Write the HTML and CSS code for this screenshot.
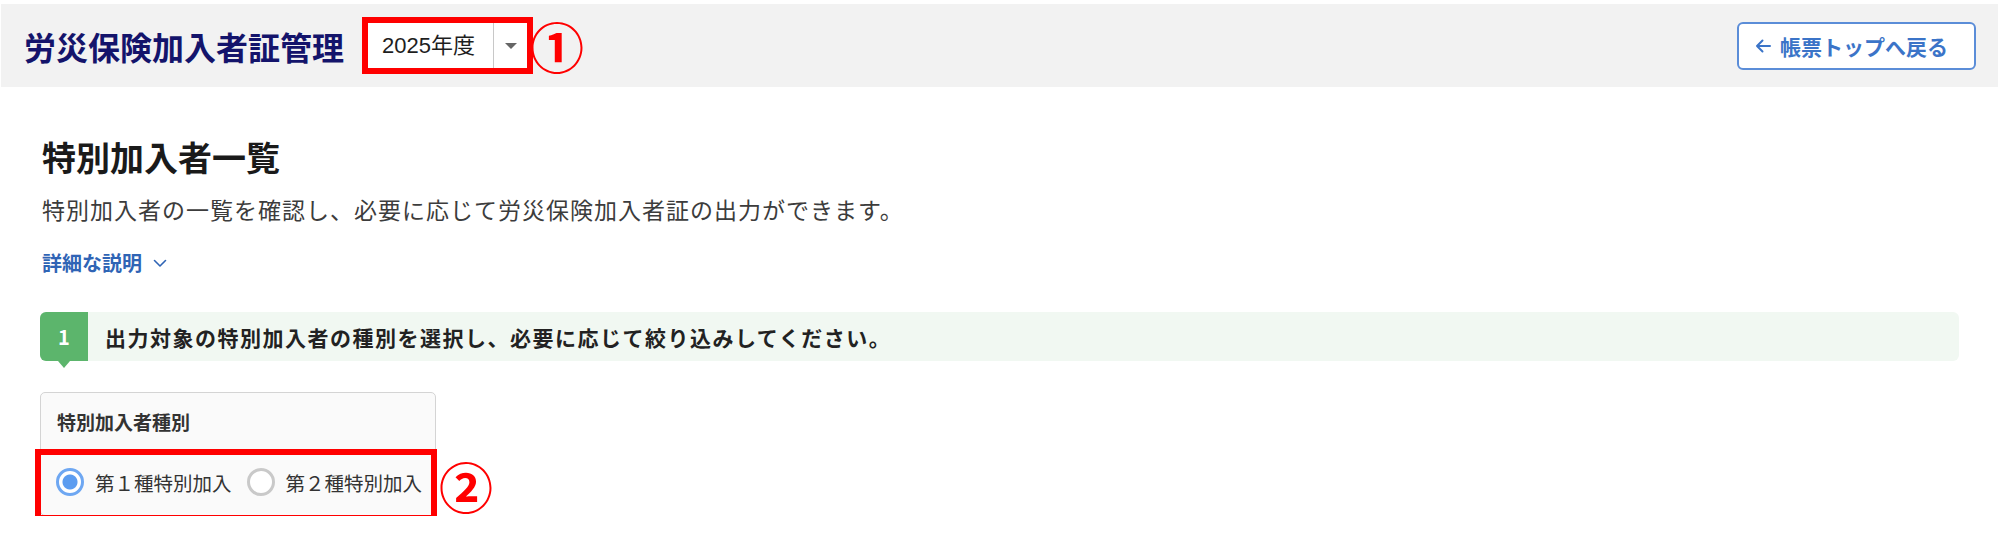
FILE: index.html
```html
<!DOCTYPE html>
<html lang="ja">
  <head>
    <meta charset="UTF-8">
    <title>労災保険加入者証管理</title>
    <link rel="stylesheet" href="styles.css">
  </head>
  <body>
    <div class="topbar">
      <h1 class="app-title">労災保険加入者証管理</h1>
      <div class="year-select">
        <span class="year-value">2025年度</span>
        <span class="year-caret"></span>
      </div>
      <span class="mark">①</span>
      <button class="back-btn" type="button">
        <svg width="20" height="20" viewBox="0 0 20 20"><path d="M17 10H4M9.5 4.5 4 10l5.5 5.5" fill="none" stroke="currentColor" stroke-width="2" stroke-linecap="round" stroke-linejoin="round"/></svg>
        <span>帳票トップへ戻る</span>
      </button>
    </div>

    <div class="content">
      <h2 class="page-title">特別加入者一覧</h2>
      <p class="lead">特別加入者の一覧を確認し、必要に応じて労災保険加入者証の出力ができます。</p>
      <a class="more-link" href="#">詳細な説明
        <svg width="16" height="16" viewBox="0 0 16 16"><path d="M2.5 5.5 8 11l5.5-5.5" fill="none" stroke="currentColor" stroke-width="1.6" stroke-linecap="round" stroke-linejoin="round"/></svg>
      </a>

      <!-- step 1 -->
      <div class="step">
        <div class="step-num">1</div>
        <div class="step-text">出力対象の特別加入者の種別を選択し、必要に応じて絞り込みしてください。</div>
      </div>

      <div class="kind-card">
        <div class="kind-head">特別加入者種別</div>
        <div class="kind-body">
          <label class="radio"><input type="radio" name="kind" checked><span>第１種特別加入</span></label>
          <label class="radio"><input type="radio" name="kind"><span>第２種特別加入</span></label>
        </div>
        <div class="mark-box"></div>
        <span class="mark mark-2">②</span>
      </div>
    </div>
  </body>
</html>
```

FILE: styles.css
```css
body {
    margin: 0;
    font-family: "Noto Sans CJK JP", "Noto Sans", sans-serif;
    background-color: #fff;
    color: #222;
}

.topbar {
    margin: 4px 2px 0 1px;
    height: 83px;
    box-sizing: border-box;
    padding: 0 22px 0 23px;
    background-color: #f2f2f2;
    display: flex;
    align-items: center;
}
.app-title {
    margin: 0 24px 0 0;
    font-size: 32px;
    line-height: 1;
    font-weight: 700;
    color: #14146b;
}
.year-select {
    display: flex;
    width: 159px;
    height: 45px;
    box-sizing: border-box;
    background-color: #fff;
    outline: 6px solid #ff0000;
}
.year-value {
    flex: 1;
    padding-left: 14px;
    font-family: "Liberation Sans", "Noto Sans CJK JP", sans-serif;
    font-size: 22px;
    line-height: 45px;
    color: #1e1e1e;
}
.year-caret {
    width: 33px;
    border-left: 1px solid #c8c8c8;
    display: flex;
    align-items: center;
    justify-content: center;
}
.year-caret::before {
    content: "";
    border-left: 6px solid transparent;
    border-right: 6px solid transparent;
    border-top: 6px solid #666;
}
.mark {
    color: #ff0000;
    font-size: 54px;
    font-weight: 700;
    line-height: 1;
    margin-left: 3px;
}
.back-btn {
    margin-left: auto;
    width: 239px;
    height: 48px;
    box-sizing: border-box;
    border: 2px solid #5b8dd8;
    border-radius: 6px;
    background-color: #fff;
    color: #3b74c8;
    font-family: inherit;
    font-size: 21px;
    font-weight: 700;
    display: flex;
    align-items: center;
    gap: 7px;
    padding: 0 0 0 14px;
    cursor: pointer;
}

.content {
    padding: 0 41px 0 40px;
}
.page-title {
    margin: 48px 0 0;
    padding-left: 2px;
    font-size: 34px;
    line-height: 44px;
    font-weight: 700;
    color: #1a1a1a;
}
.lead {
    margin: 14px 0 0;
    padding-left: 2px;
    font-size: 23px;
    line-height: 32px;
    letter-spacing: 1px;
    color: #3c3c3c;
}
.more-link {
    display: inline-flex;
    align-items: center;
    gap: 10px;
    margin: 24px 0 0 2px;
    font-size: 20px;
    line-height: 28px;
    font-weight: 700;
    color: #2f64b5;
    text-decoration: none;
}

.step {
    margin-top: 35px;
    display: flex;
    height: 49px;
    background-color: #f1f8f2;
    border-radius: 6px;
}
.step-num {
    position: relative;
    width: 48px;
    background-color: #5cb56c;
    border-radius: 6px 0 0 6px;
    color: #fff;
    font-size: 20px;
    font-weight: 700;
    display: flex;
    align-items: center;
    justify-content: center;
}
.step-num::after {
    content: "";
    position: absolute;
    left: 18px;
    bottom: -7px;
    border-left: 6px solid transparent;
    border-right: 6px solid transparent;
    border-top: 7px solid #5cb56c;
}
.step-text {
    padding-left: 17px;
    display: flex;
    align-items: center;
    font-size: 21px;
    font-weight: 700;
    letter-spacing: 1.5px;
    color: #222;
}

.kind-card {
    position: relative;
    margin-top: 31px;
    width: 396px;
    box-sizing: border-box;
    border: 1px solid #d4d4d4;
    border-radius: 5px;
    background-color: #fafafa;
}
.kind-head {
    height: 56px;
    padding-left: 16px;
    display: flex;
    align-items: center;
    font-size: 19px;
    font-weight: 700;
    color: #333;
}
.kind-body {
    height: 66px;
    padding-left: 15px;
    display: flex;
    align-items: center;
    gap: 15px;
}
.radio {
    display: flex;
    align-items: center;
    gap: 11px;
    font-size: 19.5px;
    color: #333;
}
.radio input {
    appearance: none;
    margin: 0;
    width: 28px;
    height: 28px;
    box-sizing: border-box;
    border: 3px solid #c9c9c9;
    border-radius: 50%;
    background-color: #fff;
}
.radio input:checked {
    border-color: #6ea7f2;
    background: radial-gradient(circle, #5b9cf0 0 7px, #fff 8px);
}
.mark-box {
    position: absolute;
    left: -6px;
    top: 56px;
    width: 402px;
    height: 72px;
    box-sizing: border-box;
    border: 6px solid #ff0000;
}
.mark-2 {
    position: absolute;
    left: 398px;
    top: 66px;
    margin: 0;
}
```
